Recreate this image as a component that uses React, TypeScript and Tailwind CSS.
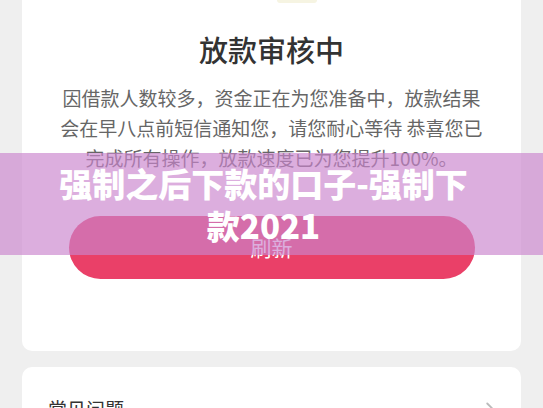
import { ChevronRight } from "lucide-react";

const cjk = { fontFamily: '"Noto Sans CJK SC", "Noto Sans", sans-serif' };

export default function App() {
  return (
    <div
      className="relative h-[408px] w-full overflow-hidden bg-[#efefef] px-[22px]"
      style={cjk}
    >
      {/* Status card */}
      <div className="flex flex-col items-center rounded-b-[10px] bg-white pb-[72px]">
        <div className="flex w-full justify-center pl-[50px]">
          <div className="h-[3px] w-[40px] rounded-b-full bg-[#f6f4e2]" />
        </div>
        <h1 className="mt-[26px] text-[29px] leading-[40px] font-medium text-[#333]">
          放款审核中
        </h1>
        <p className="mt-[14px] text-center text-[19px] leading-[30px] text-[#666]">
          因借款人数较多，资金正在为您准备中，放款结果
          <br />
          会在早八点前短信通知您，请您耐心等待 恭喜您已
          <br />
          完成所有操作，放款速度已为您提升100%。
        </p>
        <button className="mt-[43px] flex h-[63px] w-[406px] items-center justify-center rounded-full bg-[#ea4068] text-[21px] text-white">
          刷新
        </button>
      </div>

      {/* FAQ card */}
      <div className="mt-[16px] flex items-center justify-between rounded-[10px] bg-white pl-[26px] pr-[20px] pt-[29px]">
        <span className="text-[19px] leading-[26px] text-[#333]">常见问题</span>
        <ChevronRight className="h-[22px] w-[22px] text-[#bbb]" strokeWidth={2} />
      </div>

      {/* Watermark band */}
      <div className="absolute left-0 right-0 top-[153px] flex h-[102px] items-center justify-center bg-[rgba(202,132,205,0.66)] pl-[56px] pr-[72px]">
        <p className="text-center text-[33px] leading-[42px] font-black text-white">
          强制之后下款的口子-强制下款2021
        </p>
      </div>
    </div>
  );
}
